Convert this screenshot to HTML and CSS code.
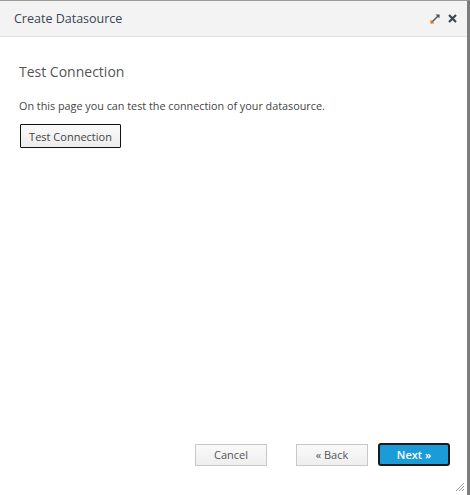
FILE: index.html
```html
<!DOCTYPE html>
<html>
<head>
<meta charset="utf-8">
<link rel="stylesheet" href="styles.css">
</head>
<body>
<div class="dialog">
  <div class="header">
    <span class="title">Create Datasource</span>
    <div class="tools">
      <svg class="ico" width="10" height="10" viewBox="0 0 10 10">
        <path d="M1 9 L9 1" stroke="#4a5260" stroke-width="1.4"/>
        <path d="M0.5 9.5 L0.5 5.5 L4.5 9.5 Z" fill="#e07b1a"/>
        <path d="M9.5 0.5 L9.5 4.5 L5.5 0.5 Z" fill="#4a5260"/>
      </svg>
      <svg class="ico" width="9" height="9" viewBox="0 0 9 9">
        <path d="M1 1 L8 8 M8 1 L1 8" stroke="#3e4654" stroke-width="2.2"/>
      </svg>
    </div>
  </div>
  <div class="content">
    <h2 class="heading">Test Connection</h2>
    <p class="desc">On this page you can test the connection of your datasource.</p>
    <button class="btn btn-test">Test Connection</button>
  </div>
  <div class="footer">
    <button class="btn btn-foot">Cancel</button>
    <button class="btn btn-foot btn-back">&laquo; Back</button>
    <button class="btn btn-next">Next &raquo;</button>
  </div>
  <svg class="grip" width="10" height="10" viewBox="0 0 10 10">
    <path d="M9 1 L1 9 M9 4 L4 9 M9 7 L7 9" stroke="#999" stroke-width="1"/>
  </svg>
</div>
</body>
</html>
```

FILE: styles.css
```css
html, body {
  margin: 0;
  padding: 0;
  background: #fff;
}
body {
  font-family: "Open Sans", "Noto Sans", sans-serif;
  color: #444;
}
.dialog {
  position: relative;
  box-sizing: border-box;
  width: 470px;
  height: 495px;
  border-top: 1px solid #9a9a9a;
  border-right: 3px solid #7d7d7d;
  display: flex;
  flex-direction: column;
  background: #fff;
}
.header {
  height: 35px;
  background: #f3f3f3;
  border-bottom: 1px solid #e2e2e2;
  display: flex;
  align-items: center;
  justify-content: space-between;
  padding: 0 10px 0 14px;
}
.title {
  font-size: 12.5px;
  color: #3a4555;
}
.tools {
  display: flex;
  align-items: center;
  gap: 8px;
}
.ico {
  display: block;
}
.content {
  flex: 1;
  padding: 25px 19px 0 19px;
}
.heading {
  margin: 0;
  font-weight: normal;
  font-size: 14px;
  line-height: 20px;
  color: #555;
}
.desc {
  margin: 16px 0 10px 0;
  font-size: 10.8px;
  line-height: 16px;
  color: #444;
}
.btn {
  font-family: "Open Sans", "Noto Sans", sans-serif;
  font-size: 11px;
  color: #444;
  cursor: pointer;
  margin: 0;
  padding: 0;
}
.btn-test {
  display: block;
  margin-left: 1px;
  width: 101px;
  height: 24px;
  border: 1px solid #111;
  border-radius: 1px;
  background: linear-gradient(#fafafa, #ececec);
}
.footer {
  display: flex;
  justify-content: flex-end;
  align-items: center;
  padding: 0 17px 29px 0;
}
.btn-foot {
  width: 72px;
  height: 22px;
  border: 1px solid #c8c8c8;
  background: linear-gradient(#fafafa, #eeeeee);
  color: #555;
}
.btn-back {
  margin-left: 29px;
}
.btn-next {
  margin-left: 10px;
  width: 72px;
  height: 23px;
  border: 2px solid #1a1a1a;
  border-radius: 3px;
  background: #1b9bd7;
  color: #fff;
  font-weight: 600;
}
.grip {
  position: absolute;
  right: 2px;
  bottom: 3px;
}
```
